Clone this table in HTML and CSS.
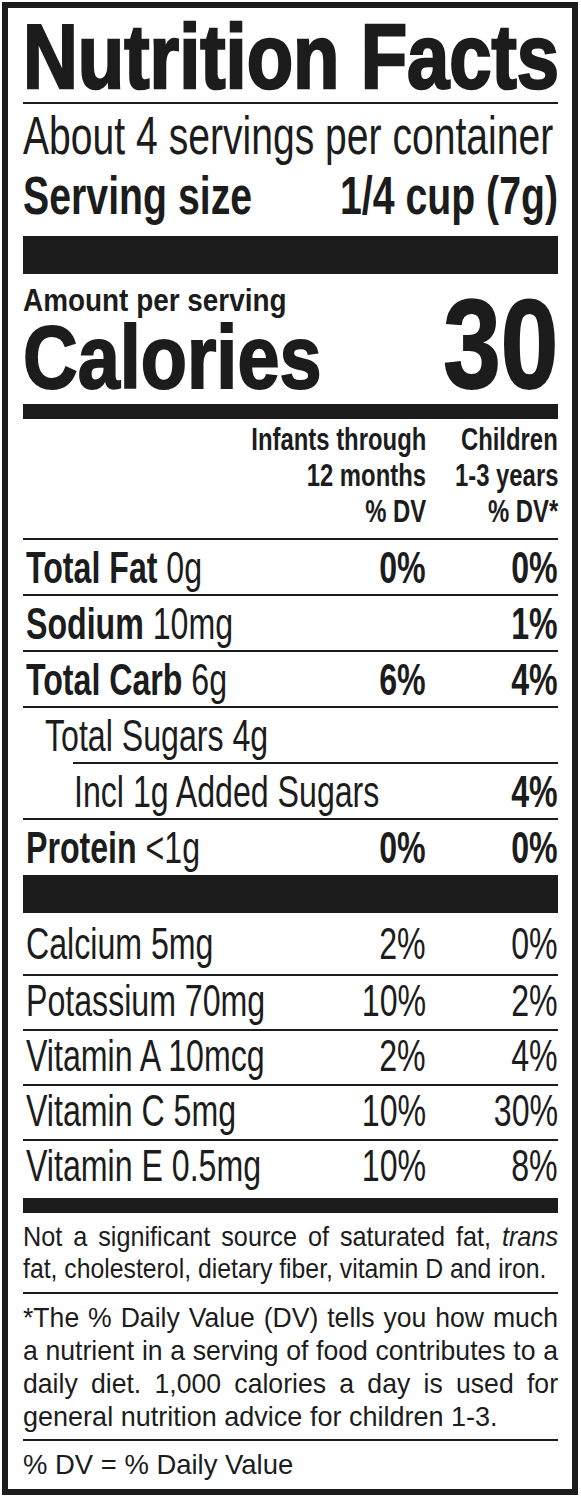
FILE: index.html
```html
<!DOCTYPE html>
<html lang="en">
<head>
    <meta charset="UTF-8">
    <meta name="viewport" content="width=device-width, initial-scale=1.0">
    <title>Nutrition Facts</title>
    <link rel="stylesheet" href="styles.css">
</head>
<body>
    <div class="label">
        <h1 class="title"><span class="sq">Nutrition Facts</span></h1>
        <div class="servings">
            <p class="per-container"><span class="sq">About 4 servings per container</span></p>
            <div class="serving-size">
                <span class="cell"><span class="sq">Serving size</span></span>
                <span class="cell end"><span class="sq">1/4 cup (7g)</span></span>
            </div>
        </div>
        <div class="bar bar-thick"></div>
        <div class="calories">
            <div>
                <p class="amount"><span class="sq">Amount per serving</span></p>
                <p class="cal-name"><span class="sq">Calories</span></p>
            </div>
            <p class="cal-value"><span class="sq">30</span></p>
        </div>
        <div class="bar bar-mid"></div>

        <div class="head">
            <span></span>
            <span class="col">
                <span class="sq">Infants through</span>
                <span class="sq">12 months</span>
                <span class="sq">% DV</span>
            </span>
            <span class="col">
                <span class="sq">Children</span>
                <span class="sq">1-3 years</span>
                <span class="sq">% DV*</span>
            </span>
        </div>

        <div class="row">
            <span class="cell"><span class="sq"><b>Total Fat</b> 0g</span></span>
            <b class="cell end"><span class="sq">0%</span></b>
            <b class="cell end"><span class="sq">0%</span></b>
        </div>
        <div class="row">
            <span class="cell"><span class="sq"><b>Sodium</b> 10mg</span></span>
            <b class="cell end"></b>
            <b class="cell end"><span class="sq">1%</span></b>
        </div>
        <div class="row">
            <span class="cell"><span class="sq"><b>Total Carb</b> 6g</span></span>
            <b class="cell end"><span class="sq">6%</span></b>
            <b class="cell end"><span class="sq">4%</span></b>
        </div>
        <div class="row sugars">
            <span class="cell"><span class="sq">Total Sugars 4g</span></span>
            <b class="cell end"></b>
            <b class="cell end"></b>
        </div>
        <div class="row added">
            <span class="cell"><span class="sq">Incl 1g Added Sugars</span></span>
            <b class="cell end"></b>
            <b class="cell end"><span class="sq">4%</span></b>
        </div>
        <div class="row">
            <span class="cell"><span class="sq"><b>Protein</b> &lt;1g</span></span>
            <b class="cell end"><span class="sq">0%</span></b>
            <b class="cell end"><span class="sq">0%</span></b>
        </div>

        <div class="bar bar-thick bar-vit"></div>

        <div class="row vit">
            <span class="cell"><span class="sq">Calcium 5mg</span></span>
            <span class="cell end"><span class="sq">2%</span></span>
            <span class="cell end"><span class="sq">0%</span></span>
        </div>
        <div class="row vit">
            <span class="cell"><span class="sq">Potassium 70mg</span></span>
            <span class="cell end"><span class="sq">10%</span></span>
            <span class="cell end"><span class="sq">2%</span></span>
        </div>
        <div class="row vit">
            <span class="cell"><span class="sq">Vitamin A 10mcg</span></span>
            <span class="cell end"><span class="sq">2%</span></span>
            <span class="cell end"><span class="sq">4%</span></span>
        </div>
        <div class="row vit">
            <span class="cell"><span class="sq">Vitamin C 5mg</span></span>
            <span class="cell end"><span class="sq">10%</span></span>
            <span class="cell end"><span class="sq">30%</span></span>
        </div>
        <div class="row vit">
            <span class="cell"><span class="sq">Vitamin E 0.5mg</span></span>
            <span class="cell end"><span class="sq">10%</span></span>
            <span class="cell end"><span class="sq">8%</span></span>
        </div>

        <div class="bar bar-mid bar-end"></div>

        <div class="note">
            <span class="jline">Not a significant source of saturated fat, <i>trans</i></span>
            <span class="sq">fat, cholesterol, dietary fiber, vitamin D and iron.</span>
        </div>
        <div class="note note-dv">
            <span class="jline">*The % Daily Value (DV) tells you how much</span>
            <span class="jline">a nutrient in a serving of food contributes to a</span>
            <span class="jline">daily diet. 1,000 calories a day is used for</span>
            <span class="sq">general nutrition advice for children 1-3.</span>
        </div>
        <div class="note note-last">
            <span class="sq">% DV = % Daily Value</span>
        </div>
    </div>
</body>
</html>
```

FILE: styles.css
```css
*{
    margin: 0;
    padding: 0;
    box-sizing: border-box;
}
body{
    background-color: #fff;
    color: #1c1c1c;
    font-family: "Liberation Sans", Arial, sans-serif;
}
.label{
    width: 576px;
    margin: 2px;
    border: 6px solid #1c1c1c;
    padding: 3px 14px 0 15px;
    overflow: hidden;
}

/* no condensed face installed, so each text run is squeezed sideways */
.sq{
    display: inline-block;
    white-space: nowrap;
    transform: scaleX(var(--k, .73));
    transform-origin: left center;
}
.end .sq,
.col .sq,
.cal-value .sq{
    transform-origin: right center;
}
.cell{
    display: flex;
    min-width: 0;
}
.cell.end{
    justify-content: flex-end;
}

.title{
    --k: .835;
    font-size: 91px;
    line-height: 91px;
    font-weight: 700;
    -webkit-text-stroke: 2.5px #1c1c1c;
}
.servings{
    border-top: 2px solid #1c1c1c;
    padding-top: 3px;
}
.per-container{
    --k: .724;
    font-size: 54px;
    line-height: 56px;
}
.serving-size{
    --k: .727;
    display: flex;
    font-size: 54px;
    line-height: 65px;
    font-weight: 700;
}
.serving-size .cell{
    flex: 1;
}
.bar{
    background-color: #1c1c1c;
}
.bar-thick{
    height: 38px;
    margin-top: 8px;
}
.bar-mid{
    height: 15px;
}
.bar-vit{
    margin-top: 1px;
}
.bar-end{
    margin-top: 4px;
}

/* calories */
.calories{
    display: flex;
    justify-content: space-between;
    align-items: flex-end;
    padding: 8px 0 10px;
    font-weight: 700;
}
.amount{
    --k: .9;
    font-size: 31px;
    line-height: 38px;
}
.cal-name{
    --k: .85;
    font-size: 89px;
    line-height: 74px;
    -webkit-text-stroke: 2px #1c1c1c;
}
.cal-value{
    --k: .82;
    font-size: 126px;
    line-height: 99px;
    -webkit-text-stroke: 2px #1c1c1c;
}

/* table */
.head,
.row{
    display: grid;
    grid-template-columns: minmax(0, 1fr) 200px 132px;
}
.head{
    --k: .77;
    padding: 3px 0 8px;
    font-size: 31px;
    line-height: 36px;
    font-weight: 700;
}
.col{
    display: flex;
    flex-direction: column;
    align-items: flex-end;
}
.row{
    border-top: 2px solid #1c1c1c;
    padding: 3px 0 1px;
    font-size: 44px;
    line-height: 50px;
}
.row .cell:first-child{
    padding-left: 3px;
}
.sugars .cell:first-child{
    padding-left: 22px;
}
.added{
    margin-left: 50px;
}
.added .cell:first-child{
    padding-left: 1px;
}
.row.vit{
    padding: 0 0 3px;
}
.bar-vit + .vit{
    border-top: none;
    padding: 6px 0 5px;
}

/* footnotes */
.note{
    --k: .885;
    font-size: 28px;
    line-height: 32px;
    padding: 8px 0 7px;
    border-bottom: 2px solid #1c1c1c;
}
.note .sq{
    display: block;
    width: max-content;
}
.note .jline{
    --k: .9;
    display: block;
    width: calc(535px / var(--k));
    white-space: nowrap;
    text-align: justify;
    text-align-last: justify;
    transform: scaleX(var(--k));
    transform-origin: left center;
}
.note-dv{
    --k: .965;
    line-height: 33px;
    padding: 7px 0 6px;
}
.note-dv .jline{
    --k: .95;
}
.note-last{
    --k: .98;
    border-bottom: none;
    padding: 8px 0 8px;
}
```
